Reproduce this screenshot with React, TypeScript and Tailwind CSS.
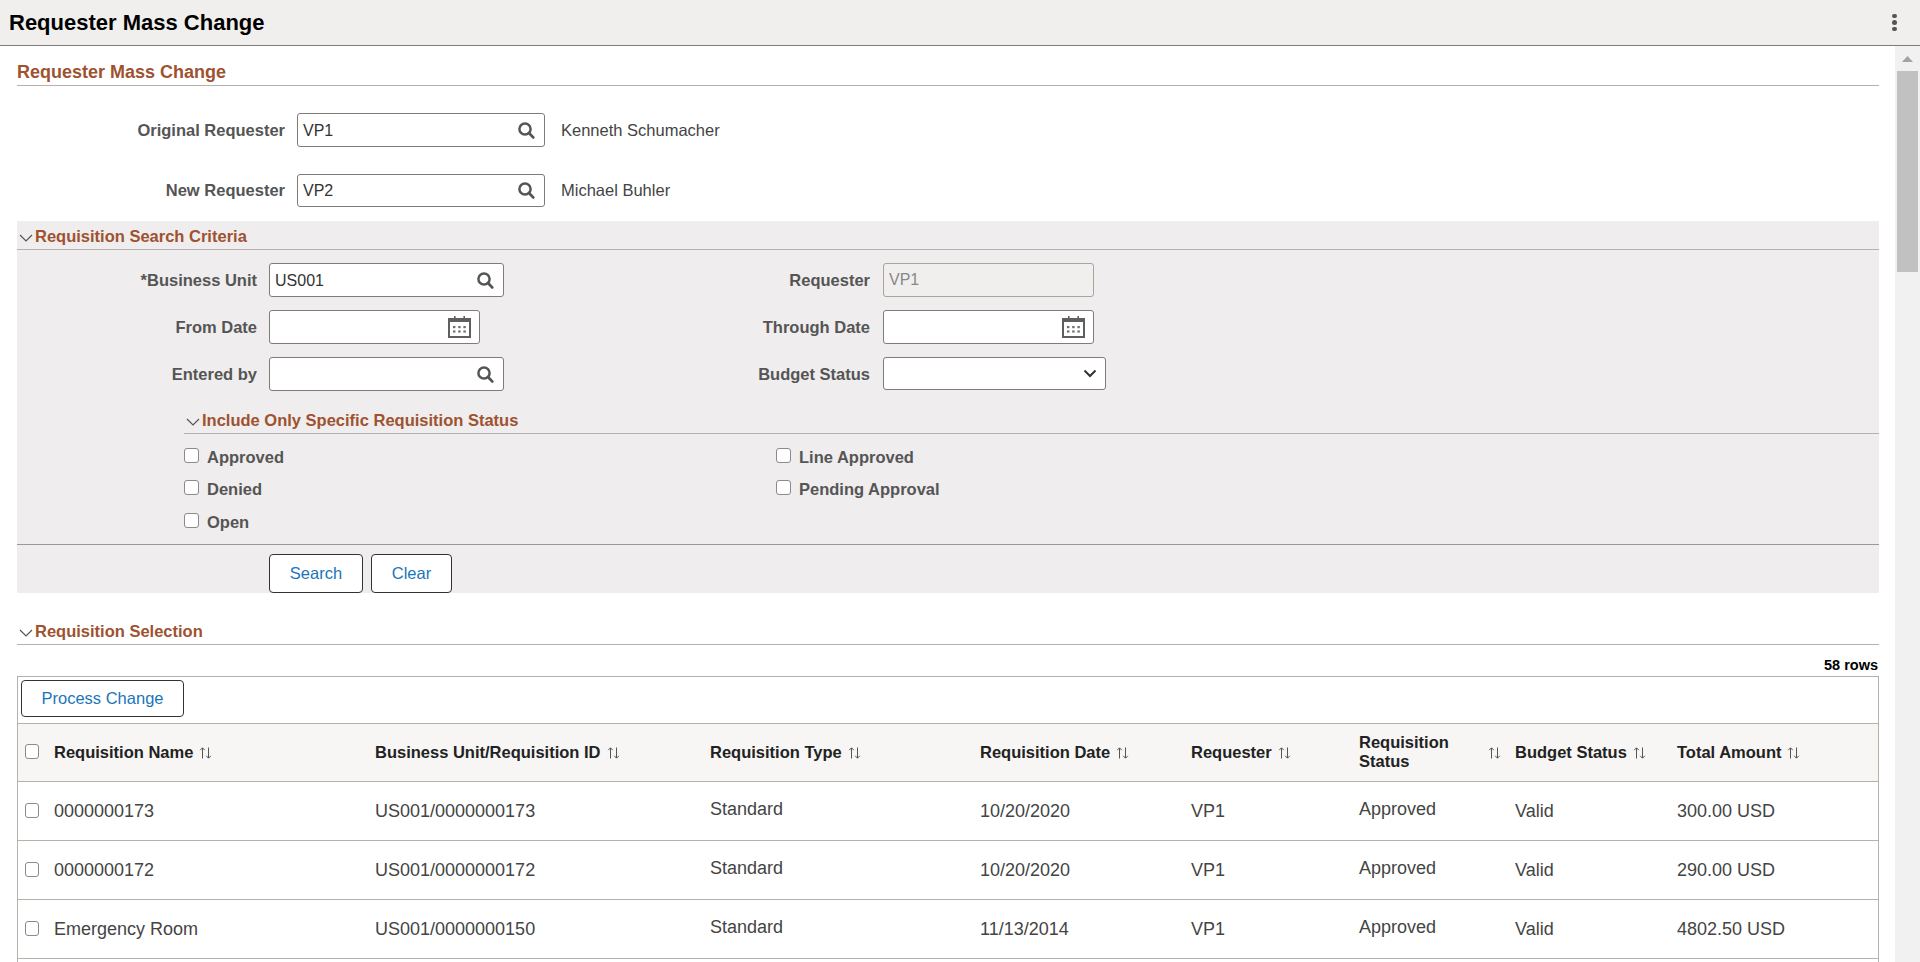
import React from 'react';

const SearchIcon = () => (
  <svg width="17" height="17" viewBox="0 0 17 17" fill="none" className="shrink-0">
    <circle cx="7" cy="7" r="5.6" stroke="#555" strokeWidth="2.5" />
    <path d="M11 11 L15.2 15.4" stroke="#555" strokeWidth="2.8" strokeLinecap="round" />
  </svg>
);

const CalendarIcon = () => (
  <svg width="23" height="22" viewBox="0 0 23 22" className="shrink-0">
    <rect x="1" y="3" width="21" height="18" fill="none" stroke="#5f5f5f" strokeWidth="2" />
    <rect x="1" y="3" width="21" height="3" fill="#5f5f5f" />
    <rect x="6" y="0" width="1.6" height="5" fill="#5f5f5f" />
    <rect x="15.4" y="0" width="1.6" height="5" fill="#5f5f5f" />
    {[5, 10.2, 15.4].map((x) =>
      [10, 14.4].map((y) => <rect key={`${x}-${y}`} x={x} y={y} width="2.4" height="2.2" fill="#6f6f6f" />)
    )}
  </svg>
);

const Chevron = () => (
  <svg width="14" height="8" viewBox="0 0 14 8" fill="none" className="shrink-0">
    <path d="M1 1 L7 7 L13 1" stroke="#555" strokeWidth="1.2" />
  </svg>
);

const SortIcon = () => (
  <svg width="13" height="12" viewBox="0 0 13 12" fill="none" className="shrink-0">
    <path d="M3.5 11.5 V1 M1.2 3.2 L3.5 0.8 L5.8 3.2" stroke="#555" strokeWidth="1" />
    <path d="M9.5 0.5 V11 M7.2 8.8 L9.5 11.2 L11.8 8.8" stroke="#555" strokeWidth="1" />
  </svg>
);

const Lookup = ({ value, width, height = 'h-[34px]' }: { value?: string; width: string; height?: string }) => (
  <div className={`flex items-center justify-between ${width} ${height} bg-white border border-[#7f7b76] rounded-[3px] pl-[5px] pr-[9px]`}>
    <input readOnly defaultValue={value} className="w-full min-w-0 pt-[1px] outline-none text-[16px] font-normal text-[#333] bg-transparent" />
    <SearchIcon />
  </div>
);

const DateBox = () => (
  <div className="flex items-center justify-end w-[211px] h-[34px] bg-white border border-[#7f7b76] rounded-[3px] pr-[8px]">
    <CalendarIcon />
  </div>
);

const SectionHead = ({ title }: { title: string }) => (
  <div className="flex items-center h-[28px] border-b border-[#b5b2ac]">
    <div className="w-[18px] pl-[2px] pt-[5px]">
      <Chevron />
    </div>
    <span className="pt-[2px] text-[16.5px] font-bold text-[#9e5230]">{title}</span>
  </div>
);

const Check = ({ label }: { label: string }) => (
  <label className="flex items-start gap-[8px]">
    <input type="checkbox" className="appearance-none w-[15px] h-[15px] bg-white border border-[#8a8a8a] rounded-[3px]" />
    <span className="text-[16.5px] leading-[19px] font-bold text-[#555]">{label}</span>
  </label>
);

const RowCheck = () => (
  <input type="checkbox" className="appearance-none ml-[7px] mb-[2px] w-[14px] h-[15px] bg-white border border-[#8a8a8a] rounded-[3px]" />
);

const gridCols = 'grid grid-cols-[36px_321px_335px_270px_211px_168px_156px_162px_1fr]';

const rows = [
  ['0000000173', 'US001/0000000173', 'Standard', '10/20/2020', 'VP1', 'Approved', 'Valid', '300.00 USD'],
  ['0000000172', 'US001/0000000172', 'Standard', '10/20/2020', 'VP1', 'Approved', 'Valid', '290.00 USD'],
  ['Emergency Room', 'US001/0000000150', 'Standard', '11/13/2014', 'VP1', 'Approved', 'Valid', '4802.50 USD'],
];

const HeadCell = ({ title }: { title: string }) => (
  <div className="flex items-center gap-[6px]">
    <span>{title}</span>
    <SortIcon />
  </div>
);

const ActionButton = ({ label, width }: { label: string; width: string }) => (
  <button className={`${width} h-full bg-white border border-[#333] rounded-[4px] text-[16.5px] text-[#1b75bb]`}>{label}</button>
);

export default function App() {
  return (
    <div className="h-screen overflow-hidden flex flex-col bg-white font-['Liberation_Sans',Arial,sans-serif]">
      <header className="flex items-center justify-between shrink-0 h-[46px] bg-[#f0efee] border-b border-[#7f7b76] pl-[9px] pr-[23px]">
        <h1 className="text-[22px] font-bold text-black">Requester Mass Change</h1>
        <div className="flex flex-col gap-[2px]">
          <span className="w-[4.6px] h-[4.6px] rounded-full bg-[#555]" />
          <span className="w-[4.6px] h-[4.6px] rounded-full bg-[#555]" />
          <span className="w-[4.6px] h-[4.6px] rounded-full bg-[#555]" />
        </div>
      </header>

      <div className="flex flex-1 min-h-0">
        <main className="flex-1 min-w-0 overflow-hidden pl-[17px] pr-[16px]">
          <div className="h-[40px] flex items-end border-b border-[#b5b2ac]">
            <h2 className="pt-[1px] translate-y-[1px] text-[18px] font-bold text-[#9e5230]">Requester Mass Change</h2>
          </div>

          <div className="flex items-center mt-[27px] h-[34px]">
            <span className="w-[268px] text-right text-[16.5px] font-bold text-[#555]">Original Requester</span>
            <div className="ml-[12px]"><Lookup value="VP1" width="w-[248px]" /></div>
            <span className="ml-[16px] text-[16.5px] text-[#444]">Kenneth Schumacher</span>
          </div>
          <div className="flex items-center mt-[27px] h-[33px]">
            <span className="w-[268px] text-right text-[16.5px] font-bold text-[#555]">New Requester</span>
            <div className="ml-[12px]"><Lookup value="VP2" width="w-[248px]" height="h-[33px]" /></div>
            <span className="ml-[16px] text-[16.5px] text-[#444]">Michael Buhler</span>
          </div>

          <section className="mt-[14px] pt-[1px] bg-[#efedee]">
            <SectionHead title="Requisition Search Criteria" />
            <div className="grid grid-cols-[240px_12px_235px_366px_13px_1fr] items-center auto-rows-[34px] gap-y-[13px] mt-[13px] text-[16.5px] font-bold text-[#555]">
              <span className="text-right">*Business Unit</span>
              <span />
              <Lookup value="US001" width="w-[235px]" />
              <span className="text-right">Requester</span>
              <span />
              <input
                readOnly
                defaultValue="VP1"
                className="w-[211px] h-[34px] bg-[#f0efee] border border-[#a8a5a0] rounded-[3px] px-[5px] text-[16px] font-normal text-[#888] outline-none"
              />

              <span className="text-right">From Date</span>
              <span />
              <DateBox />
              <span className="text-right">Through Date</span>
              <span />
              <DateBox />

              <span className="text-right">Entered by</span>
              <span />
              <Lookup width="w-[235px]" />
              <span className="text-right">Budget Status</span>
              <span />
              <div className="flex items-center justify-end self-start w-[223px] h-[33px] bg-white border border-[#7f7b76] rounded-[3px] pr-[8px]">
                <svg width="14" height="9" viewBox="0 0 14 9" fill="none">
                  <path d="M1.5 1.5 L7 7 L12.5 1.5" stroke="#333" strokeWidth="2" />
                </svg>
              </div>
            </div>

            <div className="ml-[167px] mt-[15px]">
              <SectionHead title="Include Only Specific Requisition Status" />
            </div>
            <div className="ml-[167px] mt-[14px] grid grid-cols-[592px_1fr] grid-rows-[32px_33px_31px]">
              <Check label="Approved" />
              <Check label="Line Approved" />
              <Check label="Denied" />
              <Check label="Pending Approval" />
              <Check label="Open" />
            </div>

            <div className="border-t border-[#999] pt-[9px] pl-[252px] flex gap-[8px] h-[49px]">
              <ActionButton label="Search" width="w-[94px]" />
              <ActionButton label="Clear" width="w-[81px]" />
            </div>
          </section>

          <div className="mt-[24px]">
            <SectionHead title="Requisition Selection" />
          </div>
          <div className="h-[31px] flex items-center justify-end text-[14.5px] font-bold text-black pr-[1px] pt-[10px]">58 rows</div>

          <div className="border border-[#b5b2ac]">
            <div className="h-[46px] pl-[3px] pt-[3px] pb-[6px]">
              <ActionButton label="Process Change" width="w-[163px]" />
            </div>
            <div className={`${gridCols} h-[59px] items-center bg-[#f7f6f5] border-t border-b border-[#b5b2ac] text-[16.5px] leading-[19px] font-bold text-[#222]`}>
              <RowCheck />
              <HeadCell title="Requisition Name" />
              <HeadCell title="Business Unit/Requisition ID" />
              <HeadCell title="Requisition Type" />
              <HeadCell title="Requisition Date" />
              <HeadCell title="Requester" />
              <div className="flex items-center">
                <span className="w-[129px] pb-[2px]">Requisition<br />Status</span>
                <SortIcon />
              </div>
              <HeadCell title="Budget Status" />
              <HeadCell title="Total Amount" />
            </div>
            {rows.map((row, i) => (
              <div key={i} className={`${gridCols} h-[59px] items-center border-b border-[#b5b2ac] text-[18px] text-[#444]`}>
                <RowCheck />
                <span>{row[0]}</span>
                <span>{row[1]}</span>
                <span className="pb-[4px]">{row[2]}</span>
                <span>{row[3]}</span>
                <span>{row[4]}</span>
                <span className="pb-[4px]">{row[5]}</span>
                <span>{row[6]}</span>
                <span>{row[7]}</span>
              </div>
            ))}
            <div className="h-[59px]" />
          </div>
        </main>

        <aside className="w-[25px] shrink-0 bg-[#f1f1f1] flex flex-col items-center pt-[10px]">
          <svg width="11" height="6" viewBox="0 0 11 6" className="shrink-0">
            <path d="M5.5 0 L11 6 H0 Z" fill="#a3a3a3" />
          </svg>
          <div className="w-[21px] h-[201px] bg-[#c1c1c1] mt-[9px]" />
        </aside>
      </div>
    </div>
  );
}
